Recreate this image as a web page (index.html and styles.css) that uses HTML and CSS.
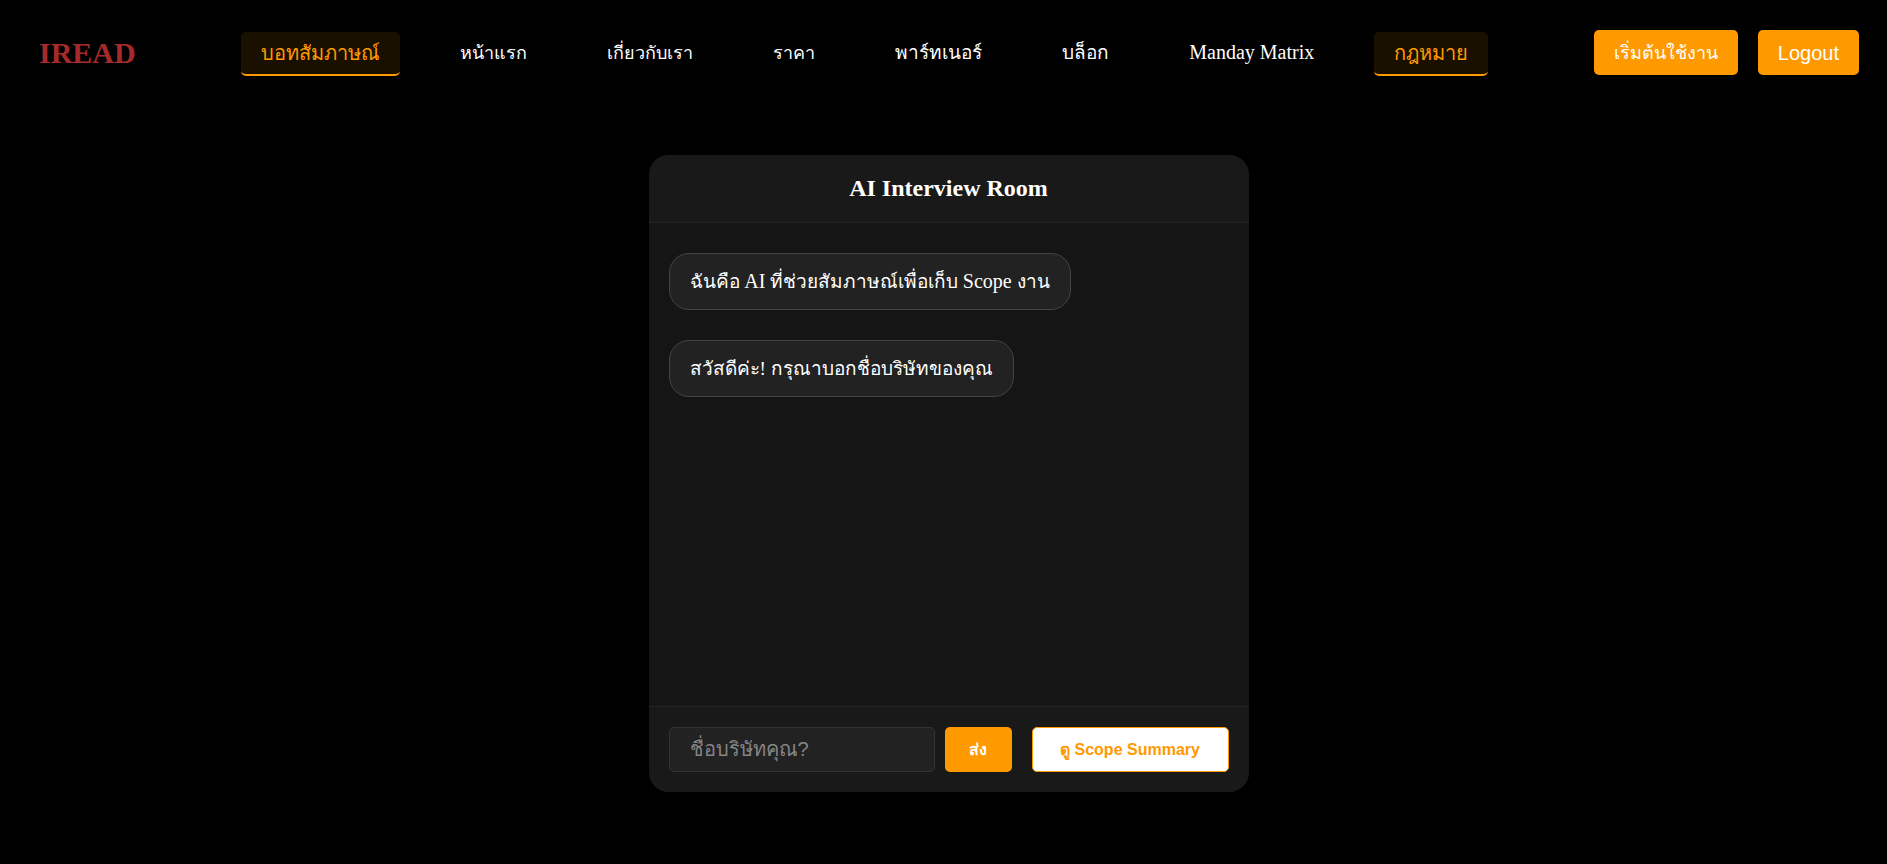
FILE: index.html
```html
<!DOCTYPE html>
<html lang="th">
<head>
<meta charset="utf-8">
<meta name="viewport" content="width=device-width, initial-scale=1">
<title>IREAD</title>
<link rel="stylesheet" href="styles.css">
</head>
<body>
<header class="topbar">
  <a class="brand" href="#">IREAD</a>
  <nav class="nav">
    <a class="nav-link active" href="#">บอทสัมภาษณ์</a>
    <a class="nav-link small" href="#">หน้าแรก</a>
    <a class="nav-link small" href="#">เกี่ยวกับเรา</a>
    <a class="nav-link small" href="#">ราคา</a>
    <a class="nav-link" href="#">พาร์ทเนอร์</a>
    <a class="nav-link" href="#">บล็อก</a>
    <a class="nav-link latin" href="#">Manday Matrix</a>
    <a class="nav-link active" href="#">กฎหมาย</a>
  </nav>
  <div class="actions">
    <button class="btn small" type="button">เริ่มต้นใช้งาน</button>
    <button class="btn" type="button">Logout</button>
  </div>
</header>
<main class="page">
  <section class="room">
    <h1 class="room-title">AI Interview Room</h1>
    <div class="messages">
      <p class="message">ฉันคือ <span class="latin">AI</span> ที่ช่วยสัมภาษณ์เพื่อเก็บ <span class="latin">Scope</span> งาน</p>
      <p class="message">สวัสดีค่ะ! กรุณาบอกชื่อบริษัทของคุณ</p>
    </div>
    <form class="composer">
      <input class="answer" type="text" placeholder="ชื่อบริษัทคุณ?" aria-label="ชื่อบริษัทคุณ?">
      <button class="btn send" type="button">ส่ง</button>
      <button class="btn summary" type="button">ดู Scope Summary</button>
    </form>
  </section>
</main>
</body>
</html>
```
FILE: styles.css
```css
* { box-sizing: border-box; }
body {
  margin: 0;
  min-height: 100vh;
  background: #000;
  color: #fff;
  font: 20px/24px "Liberation Serif", serif;
}
.topbar {
  display: flex;
  align-items: center;
  justify-content: space-between;
  padding: 29px 28px 29px 39px;
}
.brand {
  color: #a52a2a;
  font-size: 30px;
  font-weight: bold;
  text-decoration: none;
}
.nav {
  display: flex;
  gap: 40px;
  padding-top: 3px;
}
.nav-link {
  height: 44px;
  padding: 9px 20px;
  border-bottom: 2px solid transparent;
  border-radius: 5px;
  color: #fff;
  font-size: 19px;
  text-decoration: none;
  white-space: nowrap;
}
.nav-link.active {
  background: #1a1000;
  border-color: #ff9900;
  color: #ff9900;
  font-size: 20px;
}
.actions { display: flex; gap: 20px; }
.btn {
  height: 45px;
  padding: 0 20px;
  border: 0;
  border-radius: 5px;
  background: #ff9900;
  color: #fff;
  font: 20px/24px "Liberation Sans", sans-serif;
  white-space: nowrap;
}
.small { font-size: 18px; }
.latin { font-size: 20px; }
.nav-link.latin { padding-top: 8px; }
.page {
  display: flex;
  justify-content: center;
  padding: 50px 20px 72px 30px;
}
.room {
  display: flex;
  flex-direction: column;
  width: 600px;
  max-width: 100%;
  overflow: hidden;
  border-radius: 20px;
  background: #151515;
}
.room-title {
  margin: 0;
  padding: 21px 20px 22px;
  border-bottom: 1px solid #232323;
  background: #191919;
  font-size: 24px;
  line-height: 24px;
  text-align: center;
}
.messages {
  display: flex;
  flex-direction: column;
  align-items: flex-start;
  gap: 30px;
  min-height: 483px;
  padding: 30px 20px;
}
.message {
  margin: 0;
  padding: 16px 20px 15px;
  border: 1px solid #444;
  border-radius: 20px;
  background: #222;
  font-size: 19px;
}
.message .latin { line-height: 1; }
.composer {
  display: flex;
  padding: 20px;
  border-top: 1px solid #232323;
  background: #191919;
}
.answer {
  flex: 1;
  min-width: 0;
  height: 45px;
  padding: 0 20px;
  border: 1px solid #333;
  border-radius: 5px;
  background: #222;
  color: #fff;
  font: 20px/24px "Liberation Sans", sans-serif;
}
.answer::placeholder { color: #858585; }
.send {
  min-width: 67px;
  margin: 0 20px 0 10px;
  font-size: 16px;
  font-weight: bold;
}
.summary {
  min-width: 197px;
  border: 1px solid #ff9900;
  background: #fff;
  color: #ff9900;
  font-size: 16px;
  font-weight: bold;
}
```
